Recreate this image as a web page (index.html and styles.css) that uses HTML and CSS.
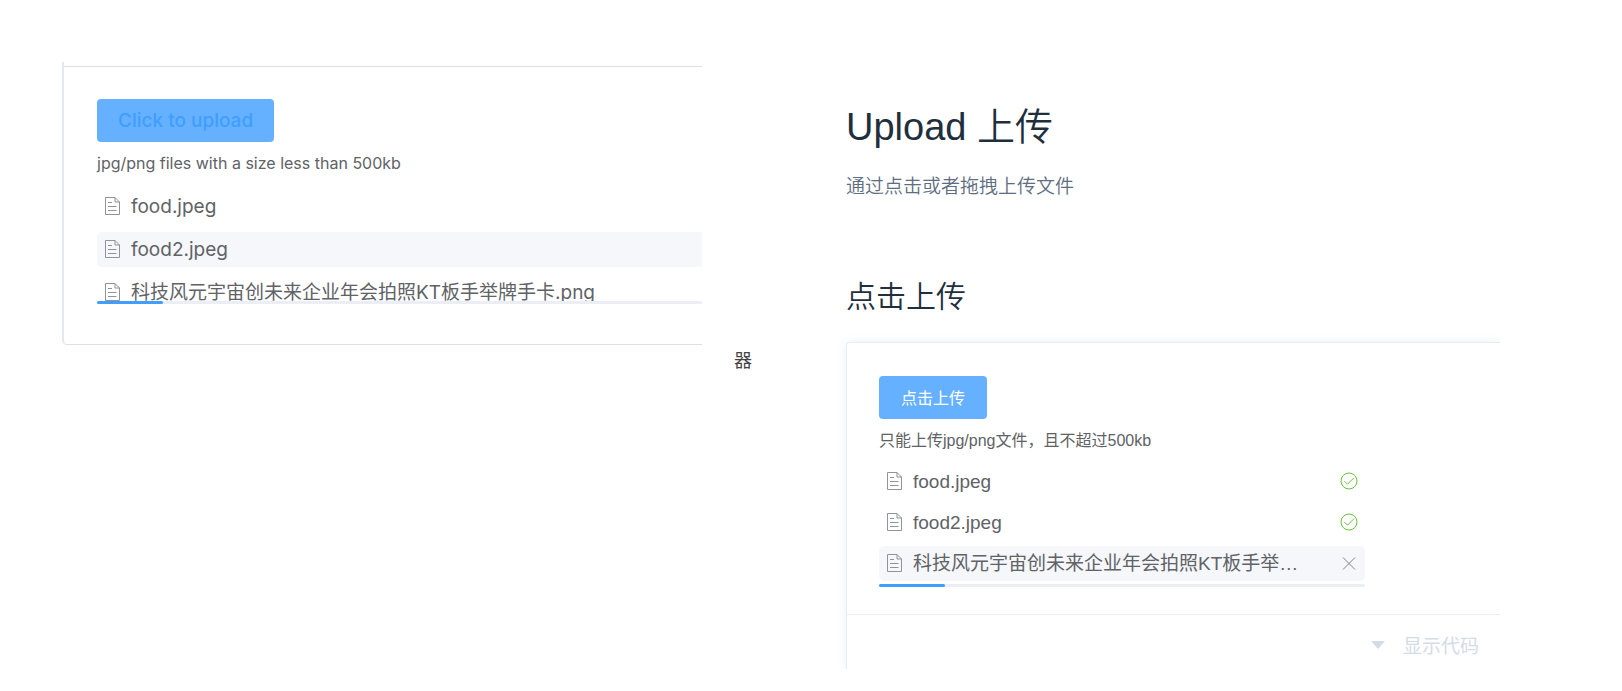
FILE: index.html
```
<!DOCTYPE html>
<html lang="zh-CN">
  <head>
    <meta charset="UTF-8" />
    <meta name="viewport" content="width=device-width, initial-scale=1.0" />
    <title>Upload 上传</title>
    <link rel="stylesheet" href="styles.css">
  </head>
  <body>
    <!-- Shared icons -->
    <svg class="sprite" aria-hidden="true">
      <symbol id="icon-document" viewBox="0 0 15 18">
        <path d="M.5.5h9.500l4.500 4.500v12.500h-14zM10 .5v4.500h4.500M3 5.500h4M3 9.500h8.500M3 13.500h8.500" />
      </symbol>
      <symbol id="icon-check" viewBox="0 0 18 18">
        <path d="M1 9a8 8 0 1 0 16 0a8 8 0 1 0-16 0M4.500 9.200l3 3l6.500-6.500" />
      </symbol>
      <symbol id="icon-close" viewBox="0 0 18 18">
        <path d="M3 3.500l12 12M15 3.500l-12 12" />
      </symbol>
    </svg>

    <div class="page">
      <section class="demo-en">
        <button type="button" class="btn btn-en">Click to upload</button>
        <p class="tip">jpg/png files with a size less than 500kb</p>
        <ul class="file-list">
          <li class="file">
            <svg class="icon-doc"><use href="#icon-document" /></svg>
            <a href="#" class="file-name">food.jpeg</a>
          </li>
          <li class="file active">
            <svg class="icon-doc"><use href="#icon-document" /></svg>
            <a href="#" class="file-name">food2.jpeg</a>
          </li>
          <li class="file uploading">
            <svg class="icon-doc"><use href="#icon-document" /></svg>
            <a href="#" class="file-name">科技风元宇宙创未来企业年会拍照KT板手举牌手卡.png</a>
          </li>
        </ul>
        <div class="progress"><div class="progress-bar"></div></div>
      </section>

      <div class="side-note">器</div>

      <main class="docs">
        <h1>Upload 上传</h1>
        <p class="intro">通过点击或者拖拽上传文件</p>
        <h2>点击上传</h2>

        <div class="card-wrap">
          <div class="card">
            <div class="card-body">
              <button type="button" class="btn">点击上传</button>
              <p class="tip">只能上传jpg/png文件，且不超过500kb</p>
              <ul class="file-list">
                <li class="file">
                  <svg class="icon-doc"><use href="#icon-document" /></svg>
                  <a href="#" class="file-name">food.jpeg</a>
                  <svg class="icon-status success"><use href="#icon-check" /></svg>
                </li>
                <li class="file">
                  <svg class="icon-doc"><use href="#icon-document" /></svg>
                  <a href="#" class="file-name">food2.jpeg</a>
                  <svg class="icon-status success"><use href="#icon-check" /></svg>
                </li>
                <li class="file active">
                  <svg class="icon-doc"><use href="#icon-document" /></svg>
                  <a href="#" class="file-name">科技风元宇宙创未来企业年会拍照KT板手举牌手卡.png</a>
                  <button type="button" class="remove" aria-label="删除">
                    <svg class="icon-status"><use href="#icon-close" /></svg>
                  </button>
                </li>
              </ul>
              <div class="progress"><div class="progress-bar"></div></div>
            </div>
            <button type="button" class="toggle-code">
              <span class="caret"></span>
              <span>显示代码</span>
            </button>
          </div>
        </div>
      </main>
    </div>
  </body>
</html>
```

FILE: styles.css
```
* {
  box-sizing: border-box;
}
body {
  margin: 0;
  background: #fff;
  color: #606266;
  font-family: "Liberation Sans", "Noto Sans CJK SC", sans-serif;
  font-size: 19px;
}
h1,
h2,
p,
ul {
  margin: 0;
  padding: 0;
  font-weight: normal;
}
button {
  border: none;
  font-family: inherit;
  cursor: pointer;
}
svg {
  fill: none;
  stroke: currentColor;
  flex: none;
}
.sprite {
  position: absolute;
  width: 0;
  height: 0;
}
.page {
  display: grid;
  grid-template-columns: minmax(0, 640fr) 144px minmax(0, 654fr);
  align-items: start;
  padding: 62px 122px 0 62px;
}

/* Upload pieces */
.btn {
  display: block;
  height: 43px;
  padding: 0 22px 2px;
  border-radius: 4px;
  background: #66b1ff;
  color: #fff;
  font-size: 16px;
}
.tip {
  margin-top: 9px;
  font-size: 16px;
  line-height: 26px;
}
.file-list {
  display: flex;
  flex-direction: column;
  list-style: none;
}
.file {
  display: flex;
  align-items: center;
  height: 35px;
  padding: 0 7px 0 8px;
  border-radius: 5px;
  line-height: 35px;
}
.file.active {
  background: #f5f7fa;
}
.file-name {
  flex: 1;
  min-width: 0;
  margin-left: 11px;
  overflow: hidden;
  color: inherit;
  text-decoration: none;
  text-overflow: ellipsis;
  white-space: nowrap;
}
.icon-doc {
  width: 15px;
  height: 18px;
  margin-bottom: 2px;
  color: #909399;
}
.icon-status {
  display: block;
  width: 18px;
  height: 18px;
  margin: 0 0 1px 36px;
}
.success {
  color: #67c23a;
}
.remove {
  padding: 0;
  background: none;
  color: #808388;
}
.progress {
  height: 3px;
  border-radius: 2px;
  background: #ebeef5;
}
.progress-bar {
  width: 66px;
  height: 3px;
  border-radius: 2px;
  background: #409eff;
}

/* English demo, cut off on its right side */
.demo-en {
  padding: 37px 0 40px 33px;
  border-bottom: 1px solid #dcdfe6;
  border-left: 2px solid #e4e7ed;
  border-bottom-left-radius: 5px;
  background: linear-gradient(#dcdfe6, #dcdfe6) 0 4px / 100% 1px no-repeat;
  font-family: Inter, "Noto Sans CJK SC", sans-serif;
}
.btn-en {
  padding: 0 21px;
  color: #409eff;
  font-size: 19px;
  font-weight: 500;
}
.demo-en .tip {
  margin-top: 8px;
}
.demo-en .file-list {
  gap: 8px;
  margin-top: 13px;
}
.demo-en .active {
  border-radius: 5px 0 0 5px;
}
.demo-en .uploading {
  align-items: flex-start;
  height: 26px;
  overflow: hidden;
}
.uploading .icon-doc {
  margin-top: 8px;
}
.side-note {
  margin-top: 285px;
  padding-left: 32px;
  color: #444;
  font-size: 18px;
  line-height: 28px;
}

/* Docs */
.docs h1 {
  margin-top: 37px;
  color: #1f2f3d;
  font-size: 38px;
  font-weight: 350;
  line-height: 56px;
}
.intro {
  margin-top: 18px;
  color: #5e6d82;
  font-weight: 350;
  line-height: 28px;
}
.docs h2 {
  margin-top: 75px;
  color: #1f2f3d;
  font-size: 30px;
  font-weight: 350;
  line-height: 42px;
}
.card-wrap {
  margin-top: 24px;
  clip-path: inset(-20px 0 0 -20px);
}
.card {
  border: solid #ebebeb;
  border-width: 1px 0 0 1px;
  border-radius: 4px 0 0 0;
  box-shadow: 0 0 10px rgba(232, 237, 250, 0.9);
}
.card-body {
  padding: 33px 135px 27px 32px;
}
.card .file-list {
  gap: 6px;
  margin-top: 10px;
}
.card .progress {
  margin-top: 3px;
}
.toggle-code {
  display: flex;
  align-items: center;
  justify-content: flex-end;
  gap: 18px;
  width: 100%;
  height: 55px;
  padding: 4px 21px 0 0;
  border-top: 1px solid #eaeefb;
  background: none;
  color: #d3dce6;
  font-size: 19px;
}
.caret {
  margin-top: 2px;
  border: solid transparent;
  border-width: 8px 7px 0;
  border-top-color: #d3dce6;
}
```
